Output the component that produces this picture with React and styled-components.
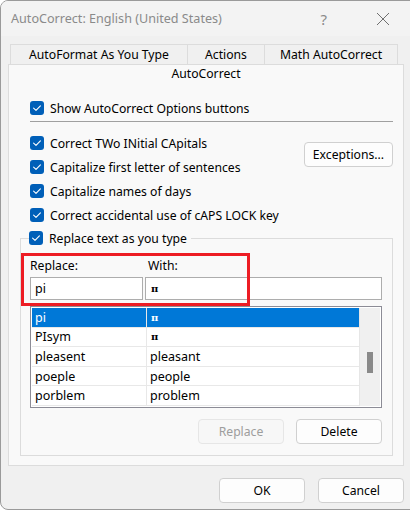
import styled, { createGlobalStyle } from "styled-components";

const GlobalStyle = createGlobalStyle`
  html, body {
    margin: 0;
    padding: 0;
    background: #ffffff;
    overflow: hidden;
  }
  body {
    font-family: "Noto Sans", "Liberation Sans", sans-serif;
    font-size: 12.2px;
    color: #000000;
  }
`;

const checkRows = [
  "Correct TWo INitial CApitals",
  "Capitalize first letter of sentences",
  "Capitalize names of days",
  "Correct accidental use of cAPS LOCK key",
];

const entries = [
  { from: "pi", to: "π", symbol: true },
  { from: "PIsym", to: "π", symbol: true },
  { from: "pleasent", to: "pleasant" },
  { from: "poeple", to: "people" },
  { from: "porblem", to: "problem" },
];

function CheckIcon() {
  return (
    <svg width="14" height="14" viewBox="0 0 14 14">
      <rect x="0" y="0" width="14" height="14" rx="3" fill="#005fb8" />
      <path d="M3.6 7.2 L6 9.4 L10.4 4.8" stroke="#ffffff" strokeWidth="1.1" fill="none" strokeLinecap="round" strokeLinejoin="round" />
    </svg>
  );
}

function Check({ label }) {
  return (
    <CheckRow>
      <CheckIcon />
      <span>{label}</span>
    </CheckRow>
  );
}

export default function App() {
  return (
    <>
      <GlobalStyle />
      <Window>
        <TitleBar>
          <Title>AutoCorrect: English (United States)</Title>
          <TitleButtons>
            <span>?</span>
            <svg width="14" height="14" viewBox="0 0 14 14">
              <path d="M1 1 L13 13 M13 1 L1 13" stroke="#6f6f6f" strokeWidth="1" />
            </svg>
          </TitleButtons>
        </TitleBar>

        <Body>
          <TabRow>
            <Tab $w={178}>AutoFormat As You Type</Tab>
            <Tab $w={78}>Actions</Tab>
            <Tab $w={134}>Math AutoCorrect</Tab>
          </TabRow>
          <Panel>
            <ActiveTab>AutoCorrect</ActiveTab>
            <PanelInner>
              <Check label="Show AutoCorrect Options buttons" />
              <Separator />
              <OptionsBlock>
                <OptionList>
                  {checkRows.map((r) => (
                    <Check key={r} label={r} />
                  ))}
                </OptionList>
                <Button $w={89} $top={11}>Exceptions...</Button>
              </OptionsBlock>

              <Group>
                <Legend>
                  <Check label="Replace text as you type" />
                </Legend>
                <EditArea>
                  <Highlight />
                  <Labels>
                    <span>Replace:</span>
                    <span>With:</span>
                  </Labels>
                  <Inputs>
                    <Field $w={113}>pi</Field>
                    <Field $grow>
                      <Pi>π</Pi>
                    </Field>
                  </Inputs>
                </EditArea>
                <ListBox>
                  <Rows>
                    {entries.map((e, i) => (
                      <Row key={e.from} $selected={i === 0}>
                        <Cell $w={115}>{e.from}</Cell>
                        <Cell $grow>{e.symbol ? <Pi>π</Pi> : e.to}</Cell>
                      </Row>
                    ))}
                  </Rows>
                  <ScrollTrack>
                    <Thumb />
                  </ScrollTrack>
                </ListBox>
                <GroupButtons>
                  <Button $w={86} $disabled>Replace</Button>
                  <Button $w={86}>Delete</Button>
                </GroupButtons>
              </Group>
            </PanelInner>
          </Panel>
          <Footer>
            <Button $w={86}>OK</Button>
            <Button $w={86}>Cancel</Button>
          </Footer>
        </Body>
      </Window>
    </>
  );
}

const Window = styled.div`
  width: 420px;
  height: 510px;
  box-sizing: border-box;
  background: #f0f0f0;
  border: 1px solid #9a9a9a;
  border-radius: 8px;
  display: flex;
  flex-direction: column;
  overflow: hidden;
`;

const TitleBar = styled.div`
  height: 35px;
  display: flex;
  align-items: center;
  justify-content: space-between;
  padding: 0 0 0 10px;
  background: #f3f3f3;
`;

const Title = styled.div`
  font-size: 12.6px;
  color: #8a8a8a;
`;

const TitleButtons = styled.div`
  display: flex;
  align-items: center;
  gap: 49px;
  font-size: 15px;
  color: #8a8a8a;
  padding-right: 29px;
`;

const Body = styled.div`
  flex: 1;
  padding: 8px 0 0 7px;
  display: flex;
  flex-direction: column;
`;

const TabRow = styled.div`
  display: flex;
  padding-left: 2px;
  height: 20px;
`;

const Tab = styled.div`
  width: ${(p) => p.$w}px;
  box-sizing: border-box;
  border: 1px solid #dcdcdc;
  border-bottom: none;
  margin-right: -1px;
  background: #f0f0f0;
  text-align: center;
  line-height: 19px;
`;

const Panel = styled.div`
  width: 396px;
  height: 402px;
  box-sizing: border-box;
  border: 1px solid #dcdcdc;
  background: #f9f9f9;
`;

const ActiveTab = styled.div`
  height: 19px;
  line-height: 18px;
  text-align: center;
`;

const PanelInner = styled.div`
  padding: 12px 10px 0 11px;
  display: flex;
  flex-direction: column;
`;

const CheckRow = styled.div`
  display: flex;
  align-items: center;
  gap: 6px;
  height: 24px;
  padding-left: 10px;
  white-space: nowrap;
`;

const Separator = styled.div`
  height: 1px;
  background: #a0a0a0;
  margin: 1px 0 9px 10px;
`;

const OptionsBlock = styled.div`
  display: flex;
  justify-content: space-between;
  align-items: flex-start;
`;

const OptionList = styled.div`
  display: flex;
  flex-direction: column;
`;

const Button = styled.div`
  width: ${(p) => p.$w}px;
  height: 25px;
  box-sizing: border-box;
  border: 1px solid ${(p) => (p.$disabled ? "#e6e6e6" : "#d0d0d0")};
  border-radius: 4px;
  background: ${(p) => (p.$disabled ? "#f7f7f7" : "#fdfdfd")};
  color: ${(p) => (p.$disabled ? "#9d9d9d" : "#000000")};
  display: flex;
  align-items: center;
  justify-content: center;
  margin-top: ${(p) => p.$top || 0}px;
`;

const Group = styled.fieldset`
  margin: -1px 0 0 0;
  padding: 0 10px 11px 9px;
  border: 1px solid #dcdcdc;
  border-radius: 0;
  min-width: 0;
`;

const Legend = styled.legend`
  padding: 0 4px 0 0;
  margin-left: -1px;
  & > div {
    padding-left: 0;
  }
`;

const EditArea = styled.div`
  position: relative;
  margin-top: 6px;
`;

const Highlight = styled.div`
  position: absolute;
  left: -9px;
  top: -3px;
  width: 229px;
  height: 53px;
  box-sizing: border-box;
  border: 3px solid #ed1c24;
  pointer-events: none;
`;

const Labels = styled.div`
  display: flex;
  height: 18px;
  align-items: center;
  & span:first-child {
    width: 118px;
  }
`;

const Inputs = styled.div`
  display: flex;
  gap: 2px;
  margin-top: 3px;
`;

const Field = styled.div`
  ${(p) => (p.$grow ? "flex: 1;" : `width: ${p.$w}px;`)}
  height: 23px;
  box-sizing: border-box;
  border: 1px solid #adadad;
  background: #ffffff;
  display: flex;
  align-items: center;
  padding-left: 4px;
  font-size: 12.5px;
`;

const Pi = styled.span`
  font-family: "DejaVu Serif", serif;
  font-size: 10px;
  font-weight: bold;
  padding-left: 1px;
`;

const ListBox = styled.div`
  margin-top: 6px;
  height: 102px;
  box-sizing: border-box;
  border: 1px solid #8c8c96;
  background: #ffffff;
  display: flex;
  padding: 1px;
`;

const Rows = styled.div`
  flex: 1;
  display: flex;
  flex-direction: column;
`;

const Row = styled.div`
  display: flex;
  height: 20px;
  box-sizing: border-box;
  background: ${(p) => (p.$selected ? "#0078d7" : "#ffffff")};
  color: ${(p) => (p.$selected ? "#ffffff" : "#000000")};
  border-bottom: 1px solid #e8e8e8;
  font-size: 12.5px;
`;

const Cell = styled.div`
  ${(p) => (p.$grow ? "flex: 1;" : `width: ${p.$w}px;`)}
  display: flex;
  align-items: center;
  padding-left: 3px;
  box-sizing: border-box;
  border-right: ${(p) => (p.$grow ? "none" : "1px solid #e8e8e8")};
`;

const ScrollTrack = styled.div`
  width: 21px;
  background: #f0f0f0;
  border-left: 1px solid #e6e6e6;
  display: flex;
  justify-content: center;
  padding-top: 44px;
  box-sizing: border-box;
`;

const Thumb = styled.div`
  width: 6px;
  height: 21px;
  background: #8a8a8a;
`;

const GroupButtons = styled.div`
  display: flex;
  justify-content: flex-end;
  gap: 12px;
  margin-top: 11px;
`;

const Footer = styled.div`
  display: flex;
  gap: 13px;
  padding: 12px 0 0 211px;
`;
